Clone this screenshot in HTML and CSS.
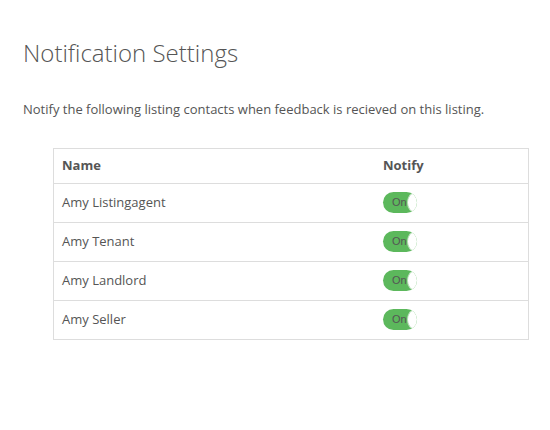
FILE: index.html
```html
<!DOCTYPE html>
<html>
<head>
<meta charset="utf-8">
<link rel="stylesheet" href="styles.css">
</head>
<body>
<div class="page">
  <h1 class="title">Notification Settings</h1>
  <p class="intro">Notify the following listing contacts when feedback is recieved on this listing.</p>
  <div class="table">
    <div class="row head">
      <div class="cell">Name</div>
      <div class="cell">Notify</div>
    </div>
    <div class="row">
      <div class="cell">Amy Listingagent</div>
      <div class="cell"><span class="toggle">On<span class="knob"></span></span></div>
    </div>
    <div class="row">
      <div class="cell">Amy Tenant</div>
      <div class="cell"><span class="toggle">On<span class="knob"></span></span></div>
    </div>
    <div class="row">
      <div class="cell">Amy Landlord</div>
      <div class="cell"><span class="toggle">On<span class="knob"></span></span></div>
    </div>
    <div class="row">
      <div class="cell">Amy Seller</div>
      <div class="cell"><span class="toggle">On<span class="knob"></span></span></div>
    </div>
  </div>
</div>
</body>
</html>
```
FILE: styles.css
```css
html, body {
  margin: 0;
  padding: 0;
  background: #fff;
}
.page {
  padding: 37px 22px 0 23px;
  font-family: "Open Sans", sans-serif;
  color: #555;
}
.title {
  margin: 0;
  font-size: 24px;
  font-weight: 300;
  line-height: 32px;
  color: #555;
}
.intro {
  margin: 31px 0 0;
  font-size: 13px;
  line-height: 18px;
}
.table {
  margin: 30px 0 0 30px;
  width: 476px;
  box-sizing: border-box;
  border: 1px solid #ddd;
  font-size: 13px;
  line-height: 18px;
}
.row {
  display: grid;
  grid-template-columns: 321px 1fr;
  height: 38px;
  border-bottom: 1px solid #ddd;
  align-items: center;
}
.row:last-child {
  border-bottom: none;
}
.row.head {
  height: 34px;
  font-weight: 700;
}
.cell {
  padding: 0 8px 2px;
  display: flex;
  align-items: center;
}
.toggle {
  position: relative;
  display: inline-block;
  width: 34px;
  height: 21px;
  margin-top: 1px;
  box-sizing: border-box;
  padding-left: 9px;
  border-radius: 10.5px;
  background: #5cb85c;
  overflow: hidden;
  font-family: "Liberation Sans", Arial, sans-serif;
  font-size: 11px;
  line-height: 20px;
  font-weight: 400;
  color: #555;
}
.knob {
  position: absolute;
  left: 24px;
  top: 0;
  width: 16px;
  height: 21px;
  box-sizing: border-box;
  border-radius: 50%;
  background: #fff;
  border: 1px solid #b5dcb5;
}
```
